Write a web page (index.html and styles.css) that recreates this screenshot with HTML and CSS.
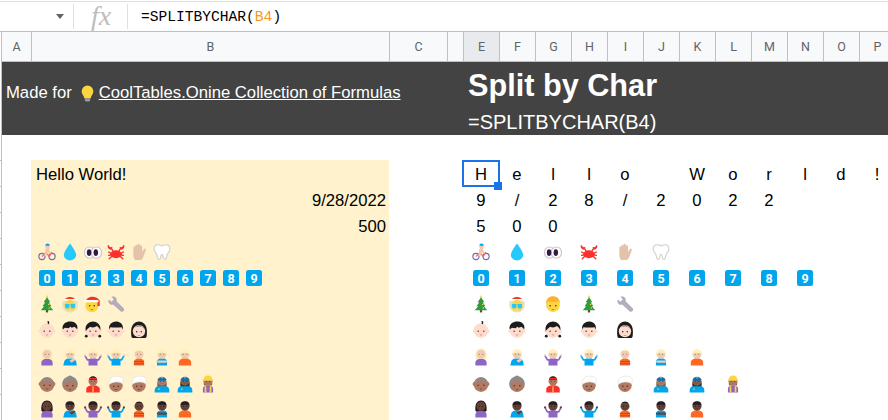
FILE: index.html
```html
<!DOCTYPE html>
<html lang="en">
<head>
<meta charset="utf-8">
<title>Split by Char</title>
<link rel="stylesheet" href="styles.css">
</head>
<body>
<svg class="defs" aria-hidden="true">
  <symbol id="bulb" viewBox="0 0 32 32"><path class="f-yl" d="M16 1a11 11 0 0 0-11 11c0 5 4 7 5 13h12c1-6 5-8 5-13A11 11 0 0 0 16 1z"/><path class="f-gy" d="M11 25h10v4l-2 2h-6l-2-2z"/></symbol>
  <symbol id="bike" viewBox="0 0 32 32"><circle class="s-pu" cx="7" cy="24" r="5.500"/><circle class="s-pu" cx="25" cy="24" r="5.500"/><path class="s-rd" d="M7 24l7-7 6 7 5-8"/><circle class="f-lt" cx="17" cy="7" r="4"/><path class="f-bl" d="M13 5a4 4 0 0 1 8 0z"/><path class="f-lt" d="M13 11l6-1 4 8-3 1-2-3-3 7h-4z"/></symbol>
  <symbol id="drop" viewBox="0 0 32 32"><path class="f-dr" d="M16 1S5 15 5 21.500a11 9.500 0 0 0 22 0C27 15 16 1 16 1z"/></symbol>
  <symbol id="eyes" viewBox="0 0 32 32"><rect class="f-wh s-ey" x="1" y="7" width="18" height="20" rx="9"/><rect class="f-wh s-ey" x="13" y="7" width="18" height="20" rx="9"/><ellipse class="f-dk" cx="9" cy="17" rx="4" ry="6"/><ellipse class="f-dk" cx="21" cy="17" rx="4" ry="6"/></symbol>
  <symbol id="crab" viewBox="0 0 32 32"><path class="s-cr" d="M3 16l5 3M3 22l5-1M4 28l5-5M29 16l-5 3M29 22l-5-1M28 28l-5-5M7 8l4 7M25 8l-4 7"/><ellipse class="f-cr" cx="16" cy="20" rx="10" ry="7"/><path class="f-cr" d="M2 3a6 6 0 0 0 5 9l3-5-4 1zM30 3a6 6 0 0 1-5 9l-3-5 4 1z"/></symbol>
  <symbol id="hand" viewBox="0 0 32 32"><path class="f-hd" d="M9 30c-3-3-3-8-3-11V8a2 2 0 0 1 3.500-1V5a2 2 0 0 1 4 0V3.500a2 2 0 0 1 4 0V6a2 2 0 0 1 4 0v10l3-5a2 2 0 0 1 3.500 2l-4 11c-1 3-3 6-5 6z"/></symbol>
  <symbol id="tooth" viewBox="0 0 32 32"><path class="f-wh s-to" d="M9 3c3 0 5 2 7 2s4-2 7-2c5 0 7 4 7 8 0 5-4 6-5 10-1 3-1 8-4 8-4 0-2-9-5-9s-1 9-5 9c-3 0-3-5-4-8-1-4-5-5-5-10 0-4 2-8 7-8z"/></symbol>
  <symbol id="tree" viewBox="0 0 32 32"><rect class="f-tr" x="14" y="26" width="4" height="5"/><path class="f-yl" d="M16 0l2 3-2 3-2-3z"/><path class="f-gn" d="M16 4l6 9h-3l5 7h-3l6 7H5l6-7H8l5-7h-3z"/><circle class="f-cr" cx="14" cy="12" r="1.300"/><circle class="f-yl" cx="19" cy="17" r="1.300"/><circle class="f-cr" cx="12" cy="22" r="1.300"/><circle class="f-yl" cx="20" cy="23" r="1.300"/></symbol>
  <symbol id="wrench" viewBox="0 0 32 32"><path class="f-wr" d="M3 8l5 4 4-4-4-5c5-2 11 2 9 8l13 13c2 3-3 8-6 5L11 17C5 19 1 13 3 8z"/></symbol>
  <symbol id="mrs" viewBox="0 0 32 32"><circle class="f-ha" cx="16" cy="17" r="14"/><path class="f-cr" d="M7 8c2-6 16-6 18 0z"/><rect class="f-wh" x="4" y="7" width="24" height="3" rx="1.500"/><circle class="f-yl" cx="16" cy="19" r="10"/><path class="f-dr" d="M7 16h8v4a3 3 0 0 1-8 0zM17 16h8v4a3 3 0 0 1-8 0z"/><path class="f-ha" d="M12 26h8l-4 5z"/></symbol>
  <symbol id="santa" viewBox="0 0 32 32"><circle class="f-yl" cx="14" cy="19" r="11.500"/><path class="f-cr" d="M3 12C4 2 22-1 28 10v10h-4v-8z"/><rect class="f-wh" x="1" y="9" width="25" height="4" rx="2"/><circle class="f-wh" cx="28" cy="22" r="2.500"/><circle class="f-dk" cx="10" cy="19" r="1.300"/><circle class="f-dk" cx="18" cy="19" r="1.300"/><path class="f-or" d="M11 25h6l-3 2z"/></symbol>
  <symbol id="blond" viewBox="0 0 32 32"><circle class="f-yl" cx="16" cy="18" r="12"/><path class="f-ob" d="M4 18C2 6 10 2 16 2s14 4 12 16c0-3-1-6-3-7-6 2-12 2-17 0-2 1-4 4-4 7z"/><circle class="f-dk" cx="11" cy="19" r="1.300"/><circle class="f-dk" cx="21" cy="19" r="1.300"/><path class="f-or" d="M13 25h6l-3 2z"/></symbol>
  <symbol id="face" viewBox="0 0 32 32"><circle class="f-fc" cx="4" cy="18" r="3"/><circle class="f-fc" cx="28" cy="18" r="3"/><circle class="f-fc" cx="16" cy="17" r="13"/><circle class="f-dk" cx="11" cy="18" r="1.300"/><circle class="f-dk" cx="21" cy="18" r="1.300"/><path class="f-mo" d="M13 24h6l-3 2z"/></symbol>
  <symbol id="baby" viewBox="0 0 32 32"><use href="#face"/><path class="s-bk" d="M18 5c2-3 0-4-1-4"/></symbol>
  <symbol id="boy" viewBox="0 0 32 32"><use href="#face"/><path class="f-bk" d="M3 15C1 5 10 1 16 1s15 3 13 14l-2-2-3-3-5 2-2-2-4 3-6-1z"/></symbol>
  <symbol id="girl" viewBox="0 0 32 32"><use href="#face"/><path class="f-bk" d="M3 17C1 6 10 1 16 1s15 5 13 16c-1-3-3-6-6-8-4 3-9 3-12 1-3 2-6 5-8 8z"/><circle class="f-bk" cx="4" cy="27" r="2.500"/><circle class="f-bk" cx="28" cy="27" r="2.500"/></symbol>
  <symbol id="man" viewBox="0 0 32 32"><use href="#face"/><path class="f-bk" d="M4 15C2 6 10 1 16 1s14 4 12 14l-2-4c-6 1-14 1-20 0z"/></symbol>
  <symbol id="woman" viewBox="0 0 32 32"><path class="f-bk" d="M2 18C2 6 10 1 16 1s14 5 14 17c0 6 0 12-3 12H5c-3 0-3-6-3-12z"/><circle class="f-fc" cx="16" cy="18" r="11"/><path class="f-bk" d="M5 16c2-6 10-8 13-8 3 3 7 4 9 8-1-8-20-10-22 0z"/><circle class="f-dk" cx="12" cy="19" r="1.300"/><circle class="f-dk" cx="20" cy="19" r="1.300"/><path class="f-mo" d="M13 25h6l-3 2z"/></symbol>

  <symbol id="head" viewBox="0 0 32 32"><circle class="f-sk" cx="16" cy="11" r="8"/><circle class="f-ey" cx="13" cy="11" r="1"/><circle class="f-ey" cx="19" cy="11" r="1"/><path class="f-mo" d="M14.500 15h3l-1.500 1z"/></symbol>
  <symbol id="bust" viewBox="0 0 32 32"><path class="f-sh" d="M5 31v-5c0-5 5-8 11-8s11 3 11 8v5z"/><use href="#head"/><path class="f-hr" d="M8 10c0-6 3-8 8-8s8 2 8 8c-4-2-12-2-16 0z"/></symbol>
  <symbol id="palm" viewBox="0 0 32 32"><path class="f-hr" d="M6 18C5 6 10 1 16 1s11 5 10 17c0 2-2 3-4 3H10c-2 0-4-1-4-3z"/><path class="f-sh" d="M6 31v-5c0-5 5-7 10-7s10 2 10 7v5z"/><use href="#head"/><path class="f-sk" d="M10 13l8-1 3 5-8 2z"/></symbol>
  <symbol id="tip" viewBox="0 0 32 32"><path class="f-sh" d="M4 31l2-8c1-3 5-5 10-5 6 0 10 2 11 6l1 7z"/><use href="#head"/><path class="f-hr" d="M8 10c0-6 3-8 8-8s8 2 8 8c-4-2-12-2-16 0z"/><path class="f-sk" d="M15 22l8-4 3 3-7 5z"/></symbol>
  <symbol id="shrug" viewBox="0 0 32 32"><path class="s-sh" d="M2 14l4 7h20l4-7"/><path class="f-sh" d="M8 31v-9c0-3 3-4 8-4s8 1 8 4v9z"/><circle class="f-sk" cx="2" cy="13" r="2"/><circle class="f-sk" cx="30" cy="13" r="2"/><use href="#head"/><path class="f-hr" d="M8 10c0-6 3-8 8-8s8 2 8 8c-4-2-12-2-16 0z"/></symbol>
  <symbol id="bald" viewBox="0 0 32 32"><path class="f-sh" d="M7 31v-6c0-4 4-7 9-7s9 3 9 7v6z"/><use href="#head"/><path class="f-hr" d="M10 6c1-4 11-4 12 0-3-1-9-1-12 0z"/><rect class="f-st" x="7" y="23" width="18" height="2"/><rect class="f-st" x="7" y="27" width="18" height="2"/></symbol>
  <symbol id="cross" viewBox="0 0 32 32"><path class="f-sh" d="M7 31V24c0-4 4-6 9-6s9 2 9 6v7z"/><use href="#head"/><path class="f-hr" d="M8 10c0-6 3-8 8-8s8 2 8 8c-4-2-12-2-16 0z"/><rect class="f-sk" x="7" y="22" width="18" height="4" rx="2"/></symbol>
  <symbol id="old" viewBox="0 0 32 32"><circle class="f-gr" cx="5" cy="16" r="4"/><circle class="f-gr" cx="27" cy="16" r="4"/><circle class="f-sk" cx="16" cy="17" r="13"/><path class="f-gr" d="M4 13c2-5 6-9 12-9s10 4 12 9c-6-3-18-3-24 0z"/><circle class="f-ey" cx="11" cy="18" r="1.300"/><circle class="f-ey" cx="21" cy="18" r="1.300"/><path class="f-mo" d="M13 24h6l-3 2z"/></symbol>
  <symbol id="granny" viewBox="0 0 32 32"><circle class="f-gr" cx="16" cy="5" r="4"/><circle class="f-gr" cx="16" cy="16" r="14"/><circle class="f-sk" cx="16" cy="18" r="11.500"/><path class="f-gr" d="M5 14c4 0 8-2 11-5 3 3 7 5 11 5l-2-7H7z"/><circle class="f-ey" cx="11" cy="19" r="1.300"/><circle class="f-ey" cx="21" cy="19" r="1.300"/><path class="f-mo" d="M13 25h6l-3 2z"/></symbol>
  <symbol id="prince" viewBox="0 0 32 32"><path class="f-cr" d="M4 31v-6c0-5 6-7 12-7s12 2 12 7v6z"/><rect class="f-yl" x="15" y="20" width="2" height="11"/><use href="#head"/><path class="f-bk" d="M9 9c0-5 3-7 7-7s7 2 7 7z"/><rect class="f-cr" x="9" y="5" width="14" height="3"/></symbol>
  <symbol id="turban" viewBox="0 0 32 32"><circle class="f-sk" cx="16" cy="18" r="12"/><path class="f-wh s-tu" d="M4 17C2 7 9 2 16 2c6 0 14 2 13 7l-1 7c-5-5-18-5-24 1z"/><circle class="f-ey" cx="12" cy="20" r="1.300"/><circle class="f-ey" cx="20" cy="20" r="1.300"/><path class="f-mo" d="M13 25h6l-3 2z"/></symbol>
  <symbol id="police" viewBox="0 0 32 32"><path class="f-bl" d="M3 31v-4c0-6 6-9 13-9s13 3 13 9v4z"/><path class="f-hr" d="M8 20c-1-4 0-8 1-10h14c1 2 2 6 1 10z"/><use href="#head"/><path class="f-bd" d="M8 8c2-5 14-5 16 0l-2 2H10z"/><rect class="f-yl" x="15" y="4" width="2" height="2"/><rect class="f-yl" x="9" y="24" width="3" height="2"/></symbol>
  <symbol id="builder" viewBox="0 0 32 32"><path class="f-pu" d="M7 31v-7c0-4 4-6 9-6s9 2 9 6v7z"/><path class="f-hr" d="M9 18c-1-3 0-6 0-8h14c0 2 1 5 0 8z"/><use href="#head"/><path class="f-yl" d="M8 10c0-6 3-9 8-9s8 3 8 9z"/><path class="f-or2" d="M10 20h3v11h-3zM19 20h3v11h-3z"/></symbol>
</svg>

<main class="sheet">
  <div class="formula">
    <div class="namebox"><span class="caret"></span></div>
    <div class="fx">fx</div>
    <div class="expr">=SPLITBYCHAR(<span class="ref">B4</span>)</div>
  </div>

  <div class="body">
    <div class="gutter"></div>
    <div class="grid">
      <div class="cols">
        <div class="col w-a">A</div><div class="col w-b">B</div><div class="col w-c">C</div><div class="col w-d"></div>
        <div class="col w-n on">E</div><div class="col w-n">F</div><div class="col w-n">G</div><div class="col w-n">H</div><div class="col w-n">I</div><div class="col w-n">J</div><div class="col w-n">K</div><div class="col w-n">L</div><div class="col w-n">M</div><div class="col w-n">N</div><div class="col w-n">O</div><div class="col w-n">P</div>
      </div>

      <div class="band">
        <div class="made"><span>Made for</span><svg class="bulb"><use href="#bulb"/></svg><a class="link" href="#">CoolTables.Onine Collection of Formulas</a></div>
        <div class="heading">
          <h1 class="title">Split by Char</h1>
          <div class="sub">=SPLITBYCHAR(B4)</div>
        </div>
      </div>

      <div class="rows">
        <div class="row tx">
          <div class="src">Hello World!</div>
          <div class="split"><div class="c sel">H</div><div class="c">e</div><div class="c">l</div><div class="c">l</div><div class="c">o</div><div class="c"></div><div class="c">W</div><div class="c">o</div><div class="c">r</div><div class="c">l</div><div class="c">d</div><div class="c">!</div></div>
        </div>
        <div class="row tx">
          <div class="src end">9/28/2022</div>
          <div class="split"><div class="c">9</div><div class="c">/</div><div class="c">2</div><div class="c">8</div><div class="c">/</div><div class="c">2</div><div class="c">0</div><div class="c">2</div><div class="c">2</div></div>
        </div>
        <div class="row tx">
          <div class="src end">500</div>
          <div class="split"><div class="c">5</div><div class="c">0</div><div class="c">0</div></div>
        </div>
        <div class="row">
          <div class="src em-row"><svg class="e"><use href="#bike"/></svg><svg class="e"><use href="#drop"/></svg><svg class="e"><use href="#eyes"/></svg><svg class="e"><use href="#crab"/></svg><svg class="e"><use href="#hand"/></svg><svg class="e"><use href="#tooth"/></svg></div>
          <div class="split"><div class="c"><svg class="e"><use href="#bike"/></svg></div><div class="c"><svg class="e"><use href="#drop"/></svg></div><div class="c"><svg class="e"><use href="#eyes"/></svg></div><div class="c"><svg class="e"><use href="#crab"/></svg></div><div class="c"><svg class="e"><use href="#hand"/></svg></div><div class="c"><svg class="e"><use href="#tooth"/></svg></div></div>
        </div>
        <div class="row">
          <div class="src key-row"><span class="key">0</span><span class="key">1</span><span class="key">2</span><span class="key">3</span><span class="key">4</span><span class="key">5</span><span class="key">6</span><span class="key">7</span><span class="key">8</span><span class="key">9</span></div>
          <div class="split"><div class="c"><span class="key">0</span></div><div class="c"><span class="key">1</span></div><div class="c"><span class="key">2</span></div><div class="c"><span class="key">3</span></div><div class="c"><span class="key">4</span></div><div class="c"><span class="key">5</span></div><div class="c"><span class="key">6</span></div><div class="c"><span class="key">7</span></div><div class="c"><span class="key">8</span></div><div class="c"><span class="key">9</span></div></div>
        </div>
        <div class="row">
          <div class="src em-row"><svg class="e"><use href="#tree"/></svg><svg class="e"><use href="#mrs"/></svg><svg class="e"><use href="#santa"/></svg><svg class="e"><use href="#wrench"/></svg></div>
          <div class="split"><div class="c"><svg class="e"><use href="#tree"/></svg></div><div class="c"><svg class="e"><use href="#mrs"/></svg></div><div class="c"><svg class="e"><use href="#blond"/></svg></div><div class="c"><svg class="e"><use href="#tree"/></svg></div><div class="c"><svg class="e"><use href="#wrench"/></svg></div></div>
        </div>
        <div class="row">
          <div class="src em-row"><svg class="e"><use href="#baby"/></svg><svg class="e"><use href="#boy"/></svg><svg class="e"><use href="#girl"/></svg><svg class="e"><use href="#man"/></svg><svg class="e"><use href="#woman"/></svg></div>
          <div class="split"><div class="c"><svg class="e"><use href="#baby"/></svg></div><div class="c"><svg class="e"><use href="#boy"/></svg></div><div class="c"><svg class="e"><use href="#girl"/></svg></div><div class="c"><svg class="e"><use href="#man"/></svg></div><div class="c"><svg class="e"><use href="#woman"/></svg></div></div>
        </div>
        <div class="row tone-l">
          <div class="src em-row"><svg class="e pu"><use href="#palm"/></svg><svg class="e bl"><use href="#tip"/></svg><svg class="e pu"><use href="#shrug"/></svg><svg class="e bl"><use href="#shrug"/></svg><svg class="e or"><use href="#bald"/></svg><svg class="e bl"><use href="#cross"/></svg><svg class="e or"><use href="#bust"/></svg></div>
          <div class="split"><div class="c"><svg class="e pu"><use href="#palm"/></svg></div><div class="c"><svg class="e bl"><use href="#tip"/></svg></div><div class="c"><svg class="e pu"><use href="#shrug"/></svg></div><div class="c"><svg class="e bl"><use href="#shrug"/></svg></div><div class="c"><svg class="e or"><use href="#bald"/></svg></div><div class="c"><svg class="e bl"><use href="#cross"/></svg></div><div class="c"><svg class="e or"><use href="#bust"/></svg></div></div>
        </div>
        <div class="row tone-m">
          <div class="src em-row"><svg class="e"><use href="#old"/></svg><svg class="e"><use href="#granny"/></svg><svg class="e"><use href="#prince"/></svg><svg class="e"><use href="#turban"/></svg><svg class="e"><use href="#turban"/></svg><svg class="e"><use href="#police"/></svg><svg class="e tone-d2"><use href="#police"/></svg><svg class="e"><use href="#builder"/></svg></div>
          <div class="split"><div class="c"><svg class="e"><use href="#old"/></svg></div><div class="c"><svg class="e"><use href="#granny"/></svg></div><div class="c"><svg class="e"><use href="#prince"/></svg></div><div class="c"><svg class="e"><use href="#turban"/></svg></div><div class="c"><svg class="e"><use href="#turban"/></svg></div><div class="c"><svg class="e"><use href="#police"/></svg></div><div class="c"><svg class="e tone-d2"><use href="#police"/></svg></div><div class="c"><svg class="e"><use href="#builder"/></svg></div></div>
        </div>
        <div class="row tone-d">
          <div class="src em-row"><svg class="e pu"><use href="#palm"/></svg><svg class="e bl"><use href="#tip"/></svg><svg class="e pu"><use href="#shrug"/></svg><svg class="e bl"><use href="#shrug"/></svg><svg class="e or"><use href="#bald"/></svg><svg class="e bl"><use href="#cross"/></svg><svg class="e or"><use href="#bust"/></svg></div>
          <div class="split"><div class="c"><svg class="e pu"><use href="#palm"/></svg></div><div class="c"><svg class="e bl"><use href="#tip"/></svg></div><div class="c"><svg class="e pu"><use href="#shrug"/></svg></div><div class="c"><svg class="e bl"><use href="#shrug"/></svg></div><div class="c"><svg class="e or"><use href="#bald"/></svg></div><div class="c"><svg class="e bl"><use href="#cross"/></svg></div><div class="c"><svg class="e or"><use href="#bust"/></svg></div></div>
        </div>
      </div>
    </div>
  </div>
</main>
</body>
</html>
```
FILE: styles.css
```css
* { box-sizing: border-box; }
html, body { margin: 0; height: 420px; overflow: hidden; background: #fff; }
body { font-family: "Liberation Sans", Arial, sans-serif; color: #000; }
.defs { position: absolute; width: 0; height: 0; }

.sheet { width: 888px; height: 420px; overflow: hidden; }

/* Formula bar */
.formula { display: flex; align-items: center; height: 31px; margin-top: 1px; border-top: 1px solid #e0e0e0; border-bottom: 1px solid #c0c0c0; }
.namebox { width: 74px; height: 25px; border-right: 1px solid #e0e0e0; display: flex; align-items: center; padding-left: 56px; }
.caret { width: 0; height: 0; border-left: 4.500px solid transparent; border-right: 4.500px solid transparent; border-top: 5px solid #5f6368; }
.fx { width: 54px; height: 25px; border-right: 1px solid #e0e0e0; font: italic 28px/23px "Liberation Serif", serif; color: #bdbdbd; padding-left: 17px; }
.expr { padding: 1px 0 0 13px; font: 14.600px/20px "Liberation Mono", monospace; color: #000; }
.ref { color: #f7981d; }

/* Sheet frame */
.body { display: flex; }
.gutter { width: 2px; height: 388px; border-right: 1px solid #c0c0c0; background: repeating-linear-gradient(to bottom, #c0c0c0 0 1px, transparent 1px 26px) 0 128px no-repeat; }
.grid { flex: 1; min-width: 0; }

/* Column headers */
.cols { display: flex; height: 30px; border-bottom: 1px solid #c0c0c0; background: #f8f9fa; }
.col { display: flex; align-items: center; justify-content: center; font: 12.500px Roboto, sans-serif; color: #5f6368; border-right: 1px solid #c0c0c0; flex: none; }
.w-a { width: 30px; }
.w-b { width: 358px; }
.w-c { width: 58px; }
.w-d { width: 16px; }
.w-n { width: 36px; }
.on { background: #e8eaed; }

/* Dark band */
.band { display: flex; height: 73px; background: #434343; color: #fff; }
.made { display: flex; align-items: center; width: 466px; padding: 0 0 11px 4px; font-size: 16.670px; }
.bulb { width: 17px; height: 17px; margin: 0 3px 0 7px; flex: none; }
.link { color: #fff; text-decoration: underline; }
.heading { display: flex; flex-direction: column; }
.title { margin: 0; font-size: 30.670px; line-height: 46px; font-weight: 700; }
.sub { font-size: 20px; line-height: 24px; margin-top: 2px; }

/* Data rows */
.rows { display: grid; grid-template-rows: 27px 26px 26px 26px 26px 26px 26px 28px 25px 26px; margin-top: 25px; }
.row { display: flex; padding-left: 29px; font-size: 16.670px; }
.src { width: 358px; flex: none; background: #fff2cc; display: flex; align-items: center; padding: 0 3px 0 5px; }
.end { justify-content: flex-end; }
.em-row { padding-left: 7px; gap: 5px; }
.key-row { padding-left: 8px; gap: 7px; }
.split { display: flex; margin-left: 74px; }
.c { width: 36px; flex: none; display: flex; align-items: center; justify-content: center; }
.tx .src, .tx .c { padding-top: 2px; }

.sel { position: relative; }
.sel::before { content: ""; position: absolute; inset: 0 -1px 0 -1px; border: 2px solid #1a73e8; }
.sel::after { content: ""; position: absolute; right: -3px; bottom: -3px; width: 8px; height: 8px; background: #1a73e8; }

.e { width: 18px; height: 18px; flex: none; }
.key { width: 16px; height: 16px; flex: none; display: flex; align-items: center; justify-content: center; border-radius: 2.500px; background: #00a6ed; color: #fff; font: 700 12.500px Roboto, sans-serif; }

/* Emoji colour tokens */
.tone-l { --skin: #f0cdb2; --hair: #fff0b8; --eye: #8a6a5a; --mouth: #d9988a; }
.tone-m { --skin: #b07b62; --hair: #8a5a30; --eye: #452c2c; --mouth: #7e4638; }
.tone-d { --skin: #664236; --hair: #2a1d22; --eye: #1c1216; --mouth: #3f2620; }
.tone-d2 { --skin: #8c5a46; --hair: #3a2a2a; }
.pu { --shirt: #8d65c5; --stripe: #8d65c5; }
.bl { --shirt: #00a6ed; --stripe: #00a6ed; }
.or { --shirt: #ff6723; --stripe: #a05a30; }

.f-sk { fill: var(--skin); }
.f-hr { fill: var(--hair); }
.f-sh { fill: var(--shirt); }
.f-st { fill: var(--stripe); }
.f-ey { fill: var(--eye); }
.f-mo { fill: var(--mouth, #e2838f); }
.s-sh { fill: none; stroke: var(--shirt); stroke-width: 3; stroke-linecap: round; stroke-linejoin: round; }
.f-yl { fill: #fcd53f; }
.f-gy { fill: #9b9b9b; }
.f-wh { fill: #fff; }
.f-dk { fill: #321b41; }
.f-dr { fill: #26c9fc; }
.f-cr { fill: #f8312f; }
.f-hd { fill: #e4c2ab; }
.f-tr { fill: #6d4534; }
.f-gn { fill: #2a9d3f; }
.f-wr { fill: #b4acbc; }
.f-ha { fill: #e8e0c0; }
.f-or { fill: #d9622b; }
.f-ob { fill: #ffb02e; }
.f-fc { fill: #fddccb; }
.f-bk { fill: #1c1c1c; }
.f-bl { fill: #00a6ed; }
.f-bd { fill: #0074ba; }
.f-pu { fill: #8d65c5; }
.f-or2 { fill: #fcd53f; }
.f-gr { fill: #8f8a88; }
.f-lt { fill: #f3c7ad; }
.s-bk { fill: none; stroke: #1c1c1c; stroke-width: 2.500px; }
.s-pu { fill: none; stroke: #7a6ba8; stroke-width: 2px; }
.s-rd { fill: none; stroke: #f8626b; stroke-width: 2px; }
.s-ey { stroke: #c9c5cc; stroke-width: 2px; }
.s-cr { fill: none; stroke: #f8312f; stroke-width: 2.500px; stroke-linecap: round; }
.s-to { stroke: #cfcfcf; stroke-width: 2px; }
.s-tu { stroke: #e0dcd8; stroke-width: 1px; }
```
